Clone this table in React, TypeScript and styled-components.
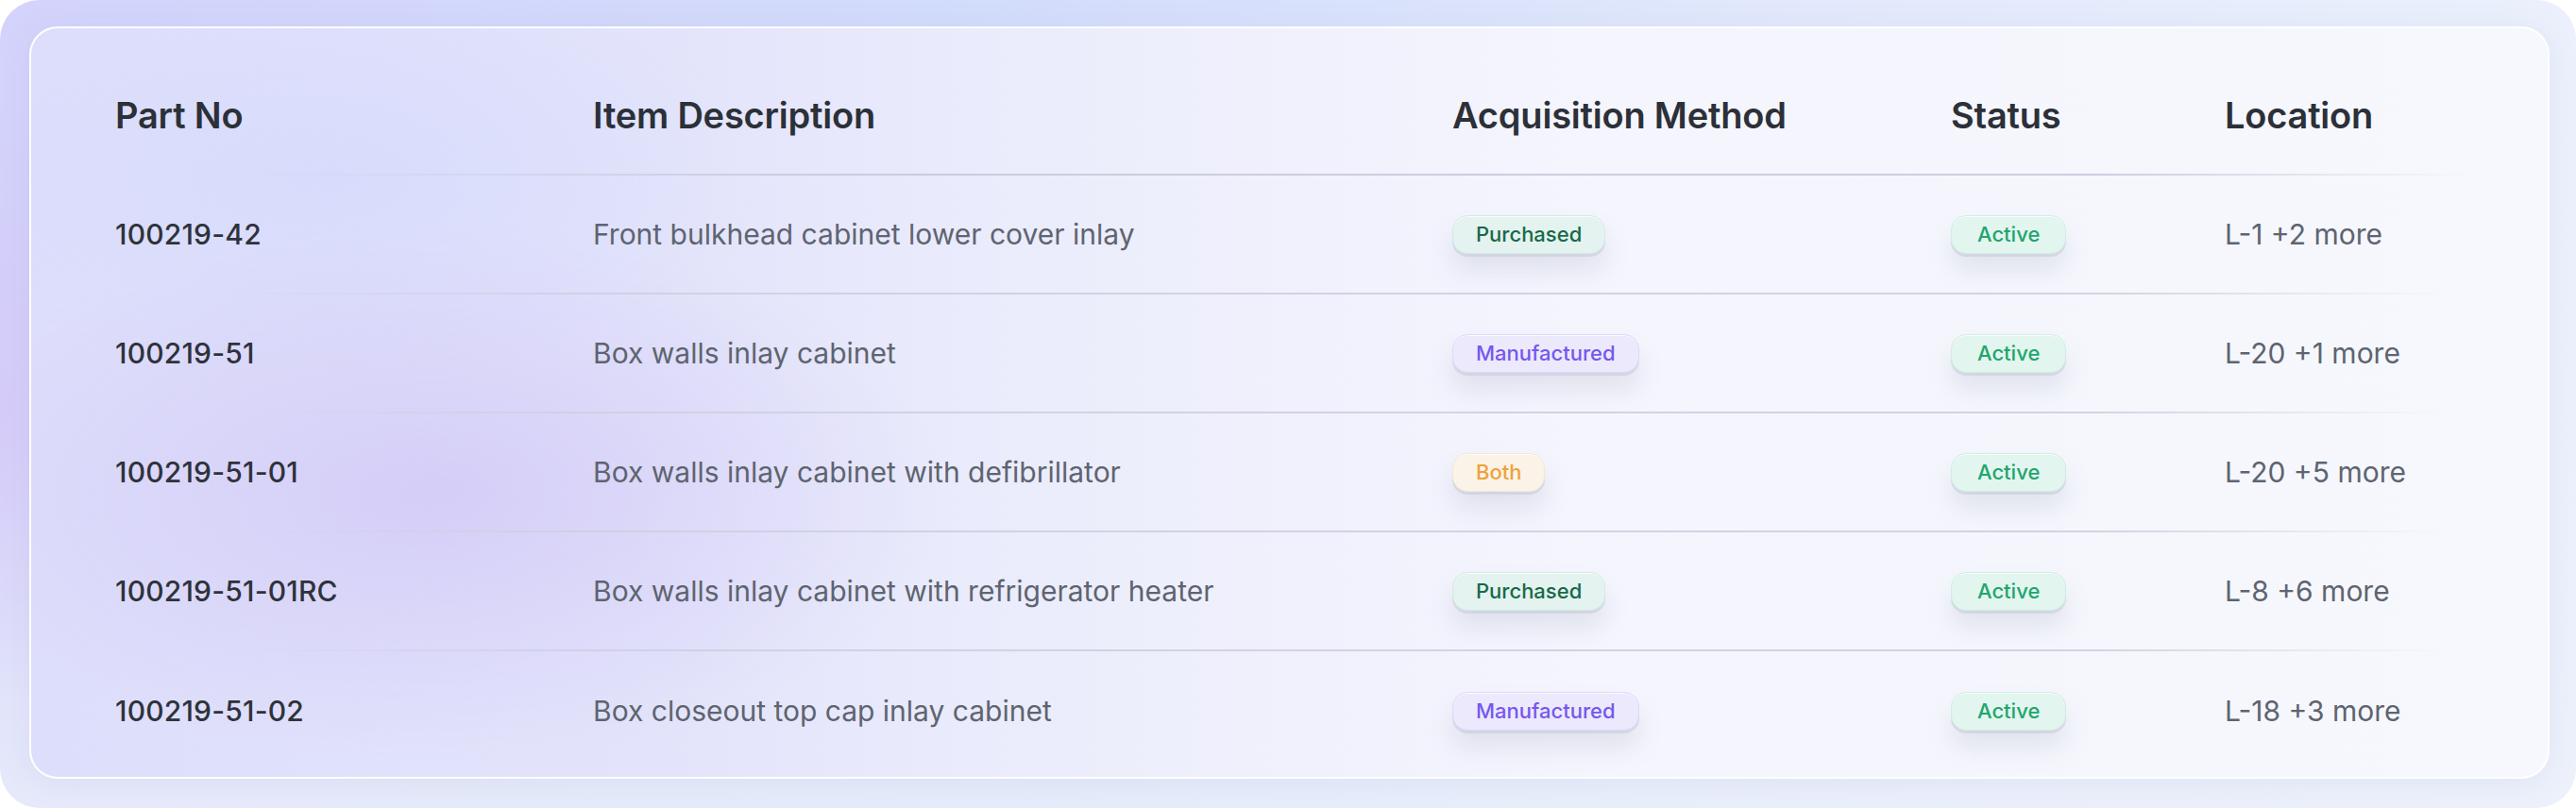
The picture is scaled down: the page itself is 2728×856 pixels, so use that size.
import React from "react";
import styled, { createGlobalStyle, css } from "styled-components";

type Acquisition = "Purchased" | "Manufactured" | "Both";

type Part = {
    partNo: string;
    description: string;
    acquisition: Acquisition;
    status: string;
    location: string;
};

const parts: Part[] = [
    { partNo: "100219-42", description: "Front bulkhead cabinet lower cover inlay", acquisition: "Purchased", status: "Active", location: "L-1 +2 more" },
    { partNo: "100219-51", description: "Box walls inlay cabinet", acquisition: "Manufactured", status: "Active", location: "L-20 +1 more" },
    { partNo: "100219-51-01", description: "Box walls inlay cabinet with defibrillator", acquisition: "Both", status: "Active", location: "L-20 +5 more" },
    { partNo: "100219-51-01RC", description: "Box walls inlay cabinet with refrigerator heater", acquisition: "Purchased", status: "Active", location: "L-8 +6 more" },
    { partNo: "100219-51-02", description: "Box closeout top cap inlay cabinet", acquisition: "Manufactured", status: "Active", location: "L-18 +3 more" },
];

const GlobalStyle = createGlobalStyle`
    * {
        box-sizing: border-box;
    }
    body {
        margin: 0;
        background: #ffffff;
        font-family: Inter, "Noto Sans", sans-serif;
    }
`;

const Frame = styled.div`
    width: 2728px;
    height: 856px;
    border-radius: 42px;
    padding: 28px 28px 31px 31px;
    display: flex;
    background:
        radial-gradient(ellipse 500px 420px at 0% 50%, rgba(212, 200, 248, 0.8), transparent 75%),
        linear-gradient(180deg, rgba(255, 255, 255, 0) 35%, rgba(236, 241, 250, 0.75) 100%),
        linear-gradient(90deg, #d3d3fb 0%, #d2dcfb 38%, #e2e9fc 70%, #ebf0fc 100%);
`;

const Card = styled.div`
    flex: 1;
    border: 2px solid rgba(255, 255, 255, 0.95);
    border-radius: 30px;
    padding: 29px 0 8px;
    box-shadow: 0 4px 30px rgba(150, 150, 200, 0.12);
    background:
        radial-gradient(ellipse 720px 380px at 16% 62%, rgba(205, 192, 245, 0.6), transparent 75%),
        radial-gradient(ellipse 600px 300px at 12% 20%, rgba(212, 218, 252, 0.7), transparent 75%),
        linear-gradient(90deg, #dddefb 0%, #e3e4fb 25%, #eeeffc 45%, #f4f5fd 62%, #f6f8fd 100%);
    overflow: hidden;
`;

const columns = "506px 910px 528px 290px 1fr";

const HeaderRow = styled.div`
    display: grid;
    grid-template-columns: ${columns};
    align-items: center;
    height: 127px;
    padding-left: 89px;
    border-bottom: 2px solid;
    border-image: linear-gradient(90deg, rgba(200, 204, 220, 0) 8%, rgba(200, 204, 220, 0.95) 30%, rgba(200, 204, 220, 0.95) 82%, rgba(200, 204, 220, 0) 97%) 1;
`;

const HeaderCell = styled.div`
    font-size: 38px;
    font-weight: 600;
    color: #2c3038;
    letter-spacing: -0.2px;
`;

const Row = styled.div<{ $last?: boolean }>`
    display: grid;
    grid-template-columns: ${columns};
    align-items: center;
    height: 126px;
    padding-left: 89px;
    ${(p) =>
        !p.$last &&
        css`
            border-bottom: 2px solid;
            border-image: linear-gradient(90deg, rgba(205, 208, 224, 0) 8%, rgba(205, 208, 224, 0.9) 22%, rgba(205, 208, 224, 0.9) 82%, rgba(205, 208, 224, 0) 96%) 1;
        `}
`;

const PartNo = styled.div`
    font-size: 30px;
    font-weight: 500;
    color: #2f323b;
    letter-spacing: 0.2px;
`;

const Muted = styled.div`
    font-size: 30px;
    font-weight: 400;
    color: #5e6470;
`;

const badgeTones = {
    Purchased: { bg: "#e4f3ef", border: "#d2ebe3", color: "#17694a" },
    Manufactured: { bg: "#ece9fd", border: "#ddd8fa", color: "#7657ee" },
    Both: { bg: "#fbf2e8", border: "#f5e7d6", color: "#eda23c" },
    Active: { bg: "#e2f5ee", border: "#cfeee2", color: "#22a56e" },
};

type Tone = keyof typeof badgeTones;

const Badge = styled.span<{ $tone: Tone }>`
    display: inline-flex;
    align-items: center;
    height: 41px;
    padding: 0 ${(p) => (p.$tone === "Active" ? "27px" : "24px")};
    border-radius: 16px;
    font-size: 22px;
    font-weight: 500;
    background: ${(p) => badgeTones[p.$tone].bg};
    border: 1.5px solid ${(p) => badgeTones[p.$tone].border};
    color: ${(p) => badgeTones[p.$tone].color};
    box-shadow:
        inset 0 1px 0 rgba(255, 255, 255, 0.8),
        0 3px 0 rgba(190, 196, 210, 0.45),
        0 18px 26px rgba(130, 135, 160, 0.17);
`;

const BadgeCell = styled.div`
    display: flex;
`;

const App: React.FC = () => {
    return (
        <>
            <GlobalStyle />
            <Frame>
                <Card>
                    <HeaderRow>
                        <HeaderCell>Part No</HeaderCell>
                        <HeaderCell>Item Description</HeaderCell>
                        <HeaderCell>Acquisition Method</HeaderCell>
                        <HeaderCell>Status</HeaderCell>
                        <HeaderCell>Location</HeaderCell>
                    </HeaderRow>
                    {parts.map((part, i) => (
                        <Row key={part.partNo} $last={i === parts.length - 1}>
                            <PartNo>{part.partNo}</PartNo>
                            <Muted>{part.description}</Muted>
                            <BadgeCell>
                                <Badge $tone={part.acquisition}>{part.acquisition}</Badge>
                            </BadgeCell>
                            <BadgeCell>
                                <Badge $tone="Active">{part.status}</Badge>
                            </BadgeCell>
                            <Muted>{part.location}</Muted>
                        </Row>
                    ))}
                </Card>
            </Frame>
        </>
    );
};

export default App;
